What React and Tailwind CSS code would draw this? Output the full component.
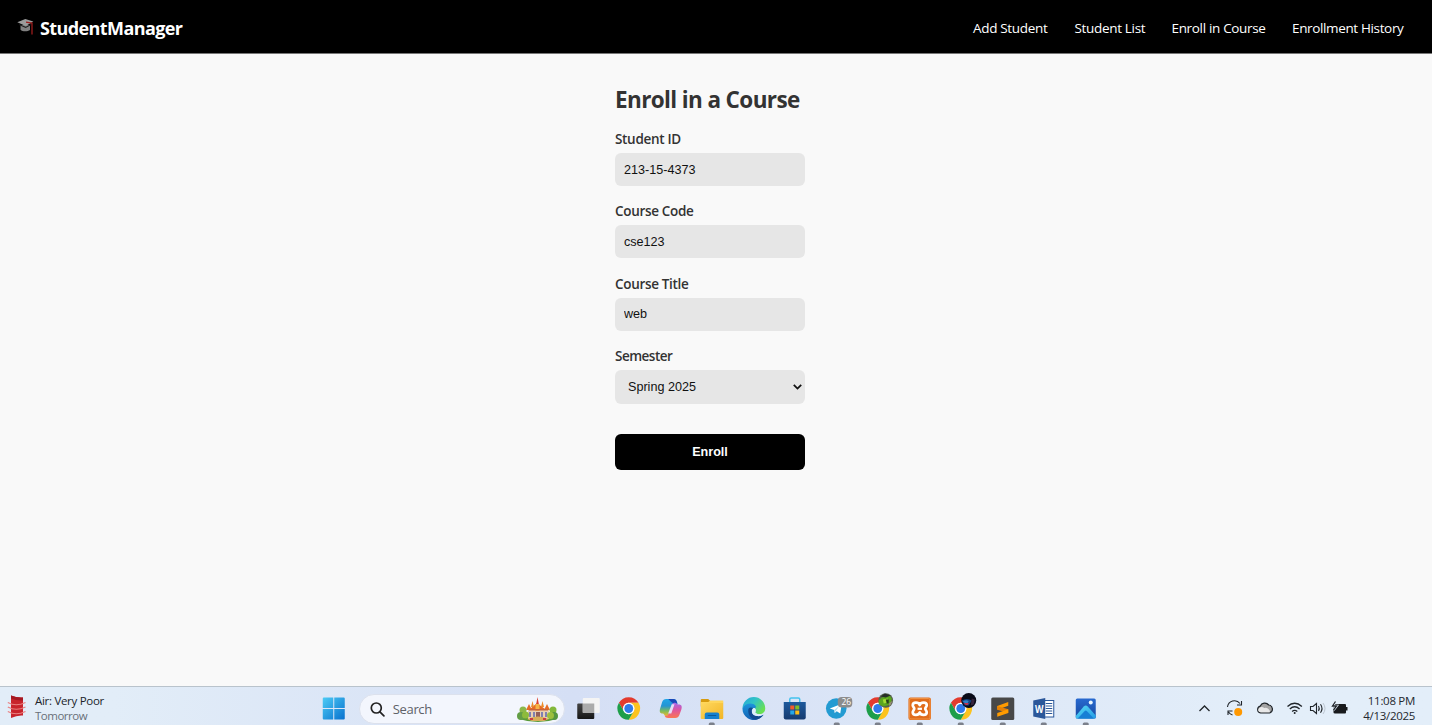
import React from "react";

const navLinks = [
  { label: "Add Student", cls: "w-[75px] tracking-[-0.32px]" },
  { label: "Student List", cls: "w-[70.5px] tracking-[-0.32px]" },
  { label: "Enroll in Course", cls: "w-[94px] tracking-[-0.33px]" },
  { label: "Enrollment History", cls: "w-[112px] tracking-[-0.36px]" },
];

function GraduationCap() {
  return (
    <svg width="18" height="18" viewBox="0 0 18 18" className="shrink-0">
      <path d="M3.500 7v4.700c2 2 7 2 9.500.2V7z" fill="#808080" />
      <path d="M.3 4.200 8.300 1l8 2.500L8.800 8z" fill="#9c9c9c" />
      <path d="m2 6 6.800 2.800L14 6l-.3 1.300-5 2.700L2.500 7.300z" fill="#1e1e1e" />
      <path d="M9 4.200 15 5v11.600" fill="none" stroke="#9c1c1c" strokeWidth="1.300" />
    </svg>
  );
}

function Header() {
  return (
    <header className="flex h-[54px] items-center justify-between border-b border-[#777] bg-black pl-[17px] pr-7 text-white">
      <div className="flex items-center gap-[5px]">
        <GraduationCap />
        <span className="whitespace-nowrap pt-[2px] text-[18px] font-bold leading-6 tracking-[-0.6px]">StudentManager</span>
      </div>
      <nav className="flex gap-[26.5px] pt-[3px] text-[13.5px]">
        {navLinks.map((l) => (
          <a key={l.label} className={"whitespace-nowrap " + l.cls}>{l.label}</a>
        ))}
      </nav>
    </header>
  );
}

function Field({ label, value }) {
  return (
    <label className="flex h-[72.3px] flex-col">
      <span className="mb-[4px] h-[20px] text-[13.5px] font-semibold leading-[21px] tracking-[-0.32px]">{label}</span>
      <input
        defaultValue={value}
        className="h-[33px] w-full rounded-[6px] bg-[#e6e6e6] px-[9px] font-['Liberation_Sans',sans-serif] text-[12.6px] text-[#111] outline-none"
      />
    </label>
  );
}

function EnrollForm() {
  return (
    <form className="ml-[615px] w-[190px] pt-[29px] text-[#333]">
      <h2 className="mb-[12px] h-[33px] whitespace-nowrap text-[22.500px] font-bold leading-[33px] tracking-[-0.62px]">Enroll in a Course</h2>
      <div className="pt-px">
        <Field label="Student ID" value="213-15-4373" />
        <Field label="Course Code" value="cse123" />
        <Field label="Course Title" value="web" />
      </div>
      <div className="flex flex-col">
        <span className="mb-[4px] h-[20px] text-[13.5px] font-semibold leading-[21px] tracking-[-0.500px]">Semester</span>
        <button type="button" className="flex h-[34px] items-center justify-between rounded-[6px] bg-[#e6e6e6] pl-[13px] pr-[3px] font-['Liberation_Sans',sans-serif] text-[12.6px] text-[#111]">
          <span className="pt-px">Spring 2025</span>
          <svg width="9" height="6" viewBox="0 0 9 6" fill="none" stroke="#111" strokeWidth="1.800">
            <path d="m.8.9 3.700 3.700L8.200.9" />
          </svg>
        </button>
      </div>
      <button type="button" className="mt-[30px] block h-9 w-full rounded-[6px] bg-black pt-px font-['Liberation_Sans',sans-serif] text-[12.6px] font-bold text-white">
        Enroll
      </button>
    </form>
  );
}

/* Taskbar icons share a cell whose origin is the icon's centre. */
function Cell({ children, running }) {
  return (
    <svg className="h-[38px] w-[41.5px] shrink-0" viewBox="-20.7 -21.5 41.4 38">
      {children}
      {running && <rect x="-3" y="14" width="6" height="3.500" rx="1.500" fill="#7b808b" />}
    </svg>
  );
}

function ChromeMark() {
  const arm = "M-9.53-5.5A11 11 0 0 1 9.53-5.5H0A5.5 5.5 0 0 0-4.76 2.75Z";
  return (
    <g transform="scale(1.03)">
      <path d={arm} fill="#e33b2e" />
      <path d={arm} fill="#fcc31e" transform="rotate(120)" />
      <path d={arm} fill="#1e9e4a" transform="rotate(240)" />
      <circle r="5.500" fill="#fff" />
      <circle r="4.300" fill="#2f7bea" />
    </g>
  );
}

function TaskView() {
  return (
    <Cell>
      <defs>
        <linearGradient id="tvd" x1="0" y1="0" x2="0" y2="1"><stop stopColor="#444" /><stop offset="1" stopColor="#161616" /></linearGradient>
      </defs>
      <rect x="-10.500" y="-5" width="17" height="15.500" rx="1" fill="url(#tvd)" />
      <rect x="-5" y="-10.500" width="17" height="15" rx="1" fill="#f4f4f4" />
      <path d="M-5-5H6.500V4.500H-5z" fill="#ababab" />
    </Cell>
  );
}

function Copilot() {
  return (
    <Cell>
      <defs>
        <linearGradient id="cpa" x1="0" y1="0" x2="0" y2="1"><stop stopColor="#1fa6e8" /><stop offset=".4" stopColor="#2494d4" /><stop offset=".7" stopColor="#7cbb5c" /><stop offset="1" stopColor="#f2b82c" /></linearGradient>
        <linearGradient id="cpb" x1="0" y1="0" x2="0" y2="1"><stop stopColor="#a566ea" /><stop offset=".5" stopColor="#e0559a" /><stop offset="1" stopColor="#fb7652" /></linearGradient>
      </defs>
      <path d="M-4.500-9.500H2.600c2 0 3 1 3.600 3l.5 1.800H4.500c-2 0-2.800 1-3.500 3L-1.800 5.400C-2.500 7.500-4 8-5.200 7.400c-1.600-.6-1.300-2.400-3-2.400-3 0-3.200-2.300-2.400-5l2-6.500c.7-2 2-3 4.100-3z" fill="url(#cpa)" />
      <path d="M-2.500-9.500H2.600c2 0 3 1 3.600 3l.5 1.800H3L.5-6.500z" fill="#1b48b8" />
      <path d="M4.500 9.500H-2.600c-2 0-3-.8-3.600-2.500 2.600 1 3.800-.5 4.500-2.800L1-3.300c.7-2 1.600-2.800 3.500-2.400 1.500.3 1.500 1.600 3.500 1.600 3 0 3.500 2.200 2.600 5L8.600 6.500c-.6 2-2 3-4.100 3z" fill="url(#cpb)" />
      <path d="M1-4.300 3.800-4.300 .5 5-2.600 5z" fill="#e5ddf5" />
    </Cell>
  );
}

function Folder() {
  return (
    <Cell running>
      <defs><linearGradient id="fld" x1="0" y1="0" x2="1" y2="1"><stop stopColor="#ffd960" /><stop offset="1" stopColor="#f2b526" /></linearGradient></defs>
      <path d="M-11-8.500q0-1 1-1h6.500l2.500 2.500h11q1 0 1 1v4h-22z" fill="#d79b0f" />
      <rect x="-11" y="-6.500" width="22.500" height="17" rx="1" fill="url(#fld)" />
      <path d="M-11-5.500v-1h7.500l2-1.500H11.500v2.500z" fill="#ffd65a" />
      <path d="M-7 10.500V6q0-2 2-2H5.500q2 0 2 2v4.500z" fill="#1680cf" />
      <path d="M-4 6.500H4.500v1H-4z" fill="#0b5a9b" />
    </Cell>
  );
}

function Edge() {
  return (
    <Cell>
      <defs>
        <linearGradient id="edg" x1="0" y1="0" x2="1" y2=".6"><stop stopColor="#25a5dc" /><stop offset=".5" stopColor="#32c4c4" /><stop offset="1" stopColor="#69e052" /></linearGradient>
        <linearGradient id="edb" x1="0" y1="0" x2="0" y2="1"><stop stopColor="#1c94dc" /><stop offset="1" stopColor="#1261b2" /></linearGradient>
      </defs>
      <path d="M-11.300 0A11.300 11.300 0 0 1 11.500 0C11.500 4 8.500 5.500 5.500 5.500 2.500 5.500 1 4.500 1.500 3.200 3 1-1-5-6-3.500-8-3-10-1.500-11.300 0z" fill="url(#edg)" />
      <path d="M-11.300 0C-9-5.500-1-6.500 2-2.500 3 0-1-.5-2 3-2.500 7 3 10 9.700 6.200 6 11.500-1 13-6 9.700-9.500 7.500-11.300 4-11.300 0z" fill="url(#edb)" />
      <path d="M-5.500 1C-6 6-3 10.500 1.500 11.200 4.500 11 8 9 9.700 6.200 4.500 9-2 7.500-2 3c0-1.500.8-2.600 2-3.300-3-1.300-5-.8-5.500 1.300z" fill="#104b91" />
      <path d="M-.3-.5C-3 1-2.500 6 3 7.500 6 8 8.500 7 10 5.500 7 6 3.500 6 1.800 4.500 1 3.500 2.500 3 2 1 1.700 0 .7-.8-.3-.5z" fill="#dceefa" />
    </Cell>
  );
}

function Store() {
  return (
    <Cell>
      <defs><linearGradient id="sto" x1="0" y1="0" x2="0" y2="1"><stop stopColor="#1e5a9d" /><stop offset="1" stopColor="#163b70" /></linearGradient></defs>
      <path d="M-5-6v-3q0-1.500 1.500-1.500h7Q5-10.500 5-9v3" fill="none" stroke="#44c2ee" strokeWidth="1.500" />
      <path d="M-11-6.500H11V9q0 2-2 2H-9q-2 0-2-2z" fill="url(#sto)" />
      <path d="M-4.500-3H-.5V1h-4z" fill="#f15a2b" /><path d="M.5-3h4V1h-4z" fill="#82bd25" />
      <path d="M-4.500 2H-.5v4h-4z" fill="#25a7e8" /><path d="M.5 2h4v4h-4z" fill="#fcbc16" />
    </Cell>
  );
}

function Telegram() {
  return (
    <Cell running>
      <circle cx="-.5" cy="0" r="10.300" fill="#239bd2" />
      <path d="M-7 0 5-4.800 3.500 5 0 2.800-2 4.600-2.500 1.500z" fill="#fff" />
      <path d="M-2.500 1.500 3-3-1 2.300-2 4.600z" fill="#b4dcf0" />
      <rect x="1" y="-11.500" width="14.500" height="10.500" rx="4" fill="#8c8c8c" />
      <text x="9.500" y="-3.200" fontSize="8.500" textAnchor="middle" fill="#fff" fontFamily="Open Sans, sans-serif">26</text>
    </Cell>
  );
}

function ChromeGreen() {
  return (
    <Cell running>
      <ChromeMark />
      <circle cx="8" cy="-8" r="7.300" fill="#55604e" />
      <path d="M1-8 4-11l8-2 2 3-1 6-7 2-5-2z" fill="#5aa61e" />
      <path d="m3-12 4-3 6 2-5 2z" fill="#262e28" />
      <path d="m5-9 5-1v4l-4 1z" fill="#a1db35" /><path d="M8-9h3v4H9z" fill="#26401a" />
      <path d="m11-5 4-3-3 6z" fill="#9a8c7b" />
    </Cell>
  );
}

function Xampp() {
  return (
    <Cell running>
      <rect x="-11.300" y="-11" width="22.500" height="22.500" rx="2" fill="#e06c1c" />
      <rect x="-10.300" y="-10" width="20.500" height="20.500" rx="1.500" fill="none" stroke="#f49a4d" strokeWidth=".8" />
      <path d="M0-3.500C1-6.500 7-6.800 7-3.200 7-1.500 5.500-1.200 5.500.2 5.500 1.500 7 2 7 3.700 7 7.200 1 7 0 4-1 7-7 7.200-7 3.700-7 2-5.500 1.500-5.500.2-5.500-1.200-7-1.500-7-3.200-7-6.800-1-6.500 0-3.500z" fill="none" stroke="#fff" strokeWidth="2.700" strokeLinejoin="round" />
      <path d="M-2.200.3H2.200" stroke="#fff" strokeWidth="2.200" />
    </Cell>
  );
}

function ChromeHelmet() {
  return (
    <Cell running>
      <ChromeMark />
      <circle cx="8" cy="-8" r="7.500" fill="#090b18" />
      <path d="M1-8q5-3 10 0L8-3H4z" fill="#15417e" />
      <path d="M2-7q3-2 6-.5L6-4z" fill="#2d80c8" /><path d="m11-10 3 1-1 5-3 1z" fill="#38243c" />
      <path d="M3-5.500h5l-1 2H5z" fill="#bd3350" />
    </Cell>
  );
}

function Sublime() {
  return (
    <Cell running>
      <rect x="-11.500" y="-11" width="23" height="22.500" rx="1.500" fill="#484848" />
      <path d="m-5.500-2.500 11-4V-2.700L-5.500 1.300z" fill="#ff9b00" />
      <path d="M-5.500-2.500v3.800L5.500 4.500V.8z" fill="#e58005" />
      <path d="M5.500.8v3.700L-5.500 8.300V4.500z" fill="#ff9b00" />
    </Cell>
  );
}

function Word() {
  return (
    <Cell running>
      <rect x="-1" y="-8" width="11" height="16.500" fill="#fff" stroke="#2b579a" strokeWidth="1" />
      <path d="M2-5h6.500M2-2.500h6.500M2 0h6.500M2 2.500h6.500M2 5h6.500" stroke="#2b579a" strokeWidth="1.200" />
      <path d="M-10.500-8 1.500-10.500v21L-10.500 8z" fill="#2b579a" />
      <text x="-4.600" y="4" fontSize="10.500" fontWeight="700" textAnchor="middle" textLength="8.500" lengthAdjust="spacingAndGlyphs" fill="#fff" fontFamily="Open Sans, sans-serif">W</text>
    </Cell>
  );
}

function Photos() {
  return (
    <Cell running>
      <defs>
        <linearGradient id="pho" x1="0" y1="0" x2="0" y2="1"><stop stopColor="#286ad0" /><stop offset="1" stopColor="#1748a0" /></linearGradient>
        <linearGradient id="phm" x1="0" y1="0" x2="1" y2="1"><stop stopColor="#59dbf5" /><stop offset="1" stopColor="#249ae5" /></linearGradient>
      </defs>
      <rect x="-10" y="-10" width="20" height="20" rx="1.500" fill="url(#pho)" />
      <path d="m-10 7.500 8-9.500q2-2 4 0l8 9v2q0 1-1 1H-9q-1 0-1-1z" fill="url(#phm)" />
      <path d="M-8 10-1 2.500q1-1 2 0L8 10z" fill="#187fd5" />
      <circle cx="5" cy="-6" r="2" fill="#e8f7ff" />
    </Cell>
  );
}

function Castle() {
  return (
    <svg width="42" height="26" viewBox="0 0 42 26" className="shrink-0">
      <path d="M2 23q18-6 38 0-9 3-19 3T2 23z" fill="#5a9a39" />
      <path d="M11 13h21v10H11z" fill="#ead0b0" />
      <path d="M9 14 12 8l3 6zm18 0 3-6 3 6zM13 13l7-6 8 6z" fill="#e56b25" />
      <path d="M19 9 20.500 1 22 9z" fill="#dc3f31" /><path d="M18.500 8h4v7h-4z" fill="#f6b347" />
      <path d="m14 11 1.500-6 1.500 6zm10 0 1.500-6 1.500 6z" fill="#ec8b29" />
      <path d="M12 16h2v5h-2zm4 0h2v5h-2zm8 0h2v5h-2zm4 0h2v5h-2z" fill="#7f81b0" />
      <path d="M19 16h4v7h-4z" fill="#94605a" />
      <path d="M12 13h19v1.500H12z" fill="#c7633c" />
      <circle cx="6" cy="14" r="3.500" fill="#8bb84a" /><circle cx="4" cy="20" r="4" fill="#629e45" />
      <circle cx="8.500" cy="19" r="3.500" fill="#8dbb3c" /><circle cx="36" cy="14" r="3.500" fill="#83b83b" />
      <circle cx="37" cy="20" r="4" fill="#559640" /><circle cx="33.500" cy="19.500" r="3.500" fill="#9cbf3d" />
      <path d="M10 23q11-5 22 0l-5 2H15z" fill="#d8ae58" />
      <path d="M13 22h3v2h-3zm13 0h3v2h-3z" fill="#ca3e42" />
    </svg>
  );
}

function Search() {
  return (
    <div className="mt-[7px] flex h-[30px] w-[206px] shrink-0 items-center rounded-full border border-[#dce1ed] bg-[#f3f6fd] pl-[10px] pr-[5px]">
      <svg width="15" height="15" viewBox="0 0 15 15" fill="none" stroke="#222" strokeWidth="1.700">
        <circle cx="6.300" cy="6" r="5" /><path d="m9.900 9.900 4 4" strokeLinecap="round" />
      </svg>
      <span className="ml-[8px] pt-px text-[13px] tracking-[-0.35px] text-[#5d6168]">Search</span>
      <div className="ml-auto pb-px"><Castle /></div>
    </div>
  );
}

function Weather() {
  return (
    <div className="flex h-full w-[313.300px] shrink-0 items-start pl-[7px] pt-[7px]">
      <svg width="20" height="25" viewBox="0 0 20 25" className="shrink-0">
        <path d="M4 1.500q6 2.500 12 2v18Q10 21 4 24z" fill="#c8242c" />
        <path d="M4 1.500q6 2.500 12 2v3Q10 7 4 4.500z" fill="#a51822" />
        <path d="M.8 8.500Q9 13 18.500 8.500M.8 13Q9 17.500 18.500 13M.8 17.500Q9 22 18.500 17.500" fill="none" stroke="#e98080" strokeWidth="1.200" />
      </svg>
      <div className="ml-2 -mt-px whitespace-nowrap text-[11.500px] leading-[15px] tracking-[-0.3px]">
        <div className="text-[#20242a]">Air: Very Poor</div>
        <div className="tracking-[-0.5px] text-[#697078]">Tomorrow</div>
      </div>
    </div>
  );
}

function Tray() {
  return (
    <div className="ml-auto flex h-full shrink-0 pr-[17px]">
      <svg width="160" height="38" viewBox="1195 687 160 38" fill="none" stroke="#20252a" strokeWidth="1.300">
        <path d="m1199.500 711 5-5 5 5" />
        <path d="M1227.500 707a7 7 0 0 1 12.500-3.500m1.500-2.500v4h-4.500M1228 715v-4h4.500m-4 1a7 7 0 0 0 4 3" strokeWidth="1.100" />
        <circle cx="1238.200" cy="712" r="4" fill="#ff9800" stroke="none" />
        <path d="M1260.500 713a3.500 3.500 0 0 1-.3-6.800 5 5 0 0 1 8.500-1.200 4.100 4.100 0 0 1 .8 8z" fill="#a3a3a3" strokeWidth="1.200" />
        <path d="M1258.200 710.500c0-3.500 4-4.500 6-2.500q3-1 4.500 1.300 1.500 1 1.200 3H1261q-2.500 0-2.800-1.800z" fill="#e8e8e8" stroke="none" />
        <path d="M1287.500 706.500q7.200-6.500 14.400 0M1289.800 709q4.900-4.400 9.800 0M1292.100 711.500q2.600-2.300 5.200 0" />
        <circle cx="1294.700" cy="713" r="1" fill="#20252a" stroke="none" />
        <path d="M1310.500 706.500h2.500l3.500-3v10l-3.500-3h-2.500zM1318.500 706q1.500 2.500 0 5M1320.500 704.300q3 4.200 0 8.400" strokeWidth="1.100" />
        <path d="M1323 703q4 5.500 0 11" stroke="#bcc5d0" strokeWidth="1" />
        <path d="M1336 704h9q1 0 1 1v7.500q0 1-1 1h-10q-1.500 0-1.500-1V705q0-1 1.500-1z" fill="#181a1d" stroke="none" />
        <path d="M1346 707h1.500v3.500h-1.500z" fill="#181a1d" stroke="none" />
        <path d="m1335.500 701.500-3 4.500h4l-3 4" stroke="#e4eef9" strokeWidth="2.600" />
        <path d="m1335.500 701.500-3 4.500h4l-3 4" strokeWidth="1.300" />
      </svg>
      <div className="w-[60px] whitespace-nowrap pt-[6px] text-right text-[11.500px] leading-[15px] tracking-[-0.3px] text-[#24282e]">
        <div>11:08 PM</div>
        <div>4/13/2025</div>
      </div>
    </div>
  );
}

function Taskbar() {
  return (
    <footer className="flex h-[39px] shrink-0 items-start overflow-hidden border-t border-[#b9c3cc] bg-linear-to-r from-[#e2edf8] from-[8%] via-[#d5dff5] via-[40%] to-[#e3eef9] to-[88%]">
      <Weather />
      <Cell>
        <defs><linearGradient id="win" x1="0" y1="0" x2="1" y2="1"><stop stopColor="#4ccbf5" /><stop offset="1" stopColor="#0871ce" /></linearGradient></defs>
        <path d="M-11-10q0-1 1-1H-.5V-.5H-11zM.5-11H10q1 0 1 1V-.5H.5zM-11 .5H-.5V11H-10q-1 0-1-1zM.5.5H11V10q0 1-1 1H.5z" fill="url(#win)" />
      </Cell>
      <div className="w-[4px] shrink-0" />
      <Search />
      <div className="w-[2px] shrink-0" />
      <TaskView />
      <Cell><ChromeMark /></Cell>
      <Copilot />
      <Folder />
      <Edge />
      <Store />
      <Telegram />
      <ChromeGreen />
      <Xampp />
      <ChromeHelmet />
      <Sublime />
      <Word />
      <Photos />
      <Tray />
    </footer>
  );
}

export default function App() {
  return (
    <div className="flex h-screen w-full flex-col overflow-hidden bg-[#f9f9f9] font-['Open_Sans','Noto_Sans',sans-serif]">
      <Header />
      <main className="min-h-0 flex-1">
        <EnrollForm />
      </main>
      <Taskbar />
    </div>
  );
}
